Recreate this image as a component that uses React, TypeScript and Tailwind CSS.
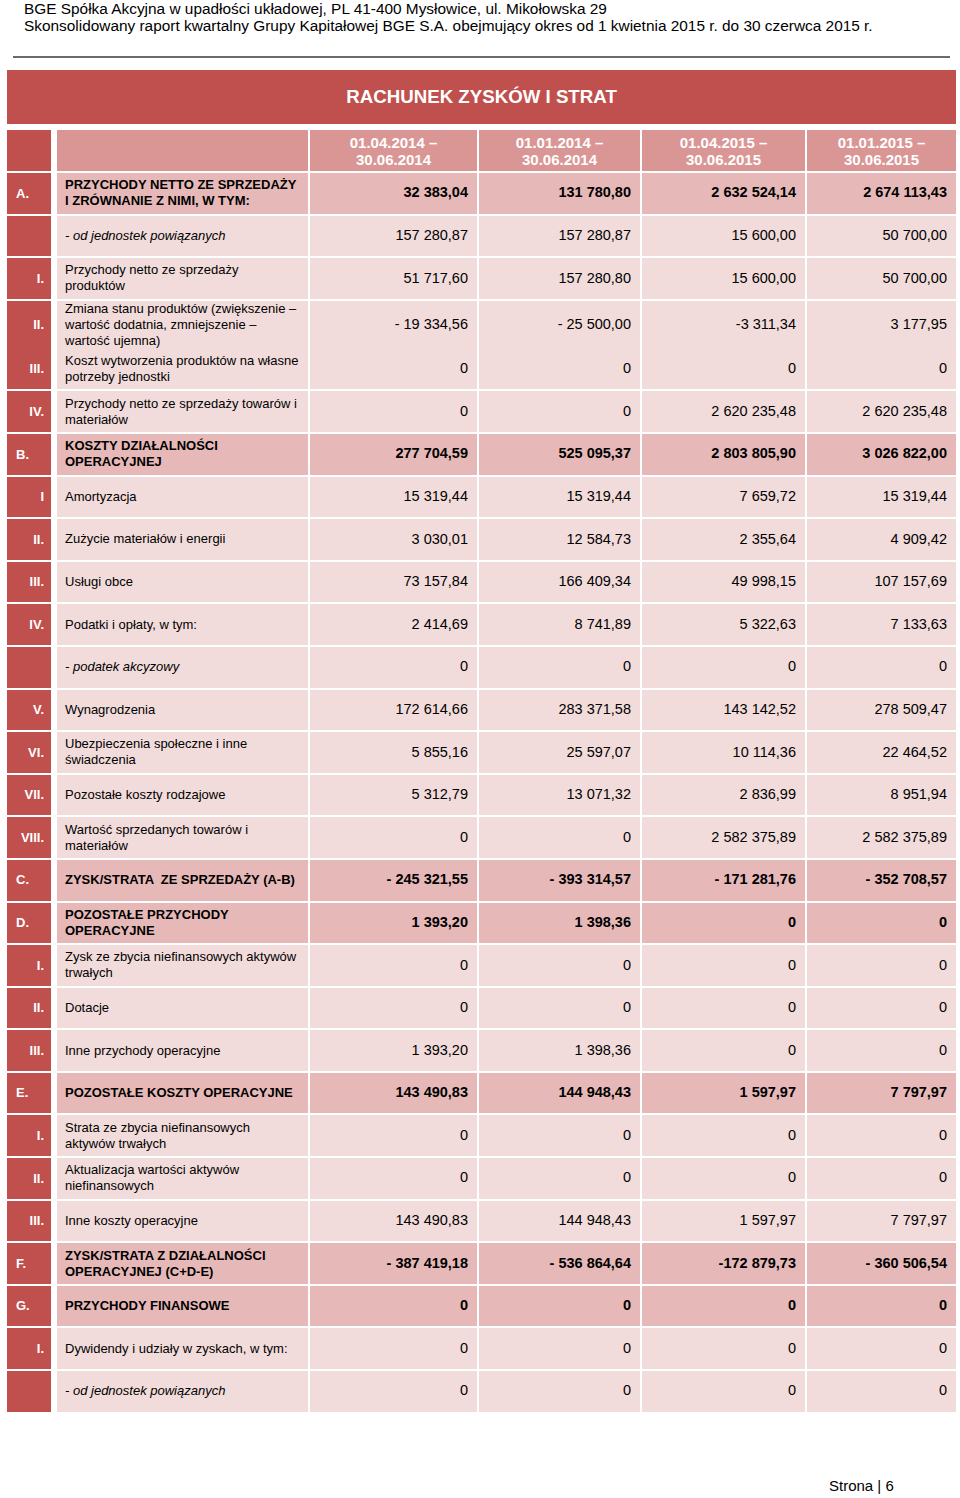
type Row = {
  k: string;
  label: string;
  v: string[];
  bold?: boolean;
  italic?: boolean;
  tall?: boolean;
};

const ROWS: Row[] = [
  { k: "A.", label: "PRZYCHODY NETTO ZE SPRZEDAŻY\nI ZRÓWNANIE Z NIMI, W TYM:", v: ["32 383,04", "131 780,80", "2 632 524,14", "2 674 113,43"], bold: true },
  { k: "", label: "- od jednostek powiązanych", v: ["157 280,87", "157 280,87", "15 600,00", "50 700,00"], italic: true },
  { k: "I.", label: "Przychody netto ze sprzedaży\nproduktów", v: ["51 717,60", "157 280,80", "15 600,00", "50 700,00"] },
  { k: "II.", label: "Zmiana stanu produktów (zwiększenie –\nwartość dodatnia, zmniejszenie –\nwartość ujemna)", v: ["- 19 334,56", "- 25 500,00", "-3 311,34", "3 177,95"], tall: true },
  { k: "III.", label: "Koszt wytworzenia produktów na własne\npotrzeby jednostki", v: ["0", "0", "0", "0"] },
  { k: "IV.", label: "Przychody netto ze sprzedaży towarów i\nmateriałów", v: ["0", "0", "2 620 235,48", "2 620 235,48"] },
  { k: "B.", label: "KOSZTY DZIAŁALNOŚCI\nOPERACYJNEJ", v: ["277 704,59", "525 095,37", "2 803 805,90", "3 026 822,00"], bold: true },
  { k: "I", label: "Amortyzacja", v: ["15 319,44", "15 319,44", "7 659,72", "15 319,44"] },
  { k: "II.", label: "Zużycie materiałów i energii", v: ["3 030,01", "12 584,73", "2 355,64", "4 909,42"] },
  { k: "III.", label: "Usługi obce", v: ["73 157,84", "166 409,34", "49 998,15", "107 157,69"] },
  { k: "IV.", label: "Podatki i opłaty, w tym:", v: ["2 414,69", "8 741,89", "5 322,63", "7 133,63"] },
  { k: "", label: "- podatek akcyzowy", v: ["0", "0", "0", "0"], italic: true },
  { k: "V.", label: "Wynagrodzenia", v: ["172 614,66", "283 371,58", "143 142,52", "278 509,47"] },
  { k: "VI.", label: "Ubezpieczenia społeczne i inne\nświadczenia", v: ["5 855,16", "25 597,07", "10 114,36", "22 464,52"] },
  { k: "VII.", label: "Pozostałe koszty rodzajowe", v: ["5 312,79", "13 071,32", "2 836,99", "8 951,94"] },
  { k: "VIII.", label: "Wartość sprzedanych towarów i\nmateriałów", v: ["0", "0", "2 582 375,89", "2 582 375,89"] },
  { k: "C.", label: "ZYSK/STRATA  ZE SPRZEDAŻY (A-B)", v: ["- 245 321,55", "- 393 314,57", "- 171 281,76", "- 352 708,57"], bold: true },
  { k: "D.", label: "POZOSTAŁE PRZYCHODY\nOPERACYJNE", v: ["1 393,20", "1 398,36", "0", "0"], bold: true },
  { k: "I.", label: "Zysk ze zbycia niefinansowych aktywów\ntrwałych", v: ["0", "0", "0", "0"] },
  { k: "II.", label: "Dotacje", v: ["0", "0", "0", "0"] },
  { k: "III.", label: "Inne przychody operacyjne", v: ["1 393,20", "1 398,36", "0", "0"] },
  { k: "E.", label: "POZOSTAŁE KOSZTY OPERACYJNE", v: ["143 490,83", "144 948,43", "1 597,97", "7 797,97"], bold: true },
  { k: "I.", label: "Strata ze zbycia niefinansowych\naktywów trwałych", v: ["0", "0", "0", "0"] },
  { k: "II.", label: "Aktualizacja wartości aktywów\nniefinansowych", v: ["0", "0", "0", "0"] },
  { k: "III.", label: "Inne koszty operacyjne", v: ["143 490,83", "144 948,43", "1 597,97", "7 797,97"] },
  { k: "F.", label: "ZYSK/STRATA Z DZIAŁALNOŚCI\nOPERACYJNEJ (C+D-E)", v: ["- 387 419,18", "- 536 864,64", "-172 879,73", "- 360 506,54"], bold: true },
  { k: "G.", label: "PRZYCHODY FINANSOWE", v: ["0", "0", "0", "0"], bold: true },
  { k: "I.", label: "Dywidendy i udziały w zyskach, w tym:", v: ["0", "0", "0", "0"] },
  { k: "", label: "- od jednostek powiązanych", v: ["0", "0", "0", "0"], italic: true },
];

const PERIODS = [
  ["01.04.2014 –", "30.06.2014"],
  ["01.01.2014 –", "30.06.2014"],
  ["01.04.2015 –", "30.06.2015"],
  ["01.01.2015 –", "30.06.2015"],
];

const GRID = "grid grid-cols-[48px_251px_167px_161px_163px_149px] gap-x-[2px]";

function TableRow({ row }: { row: Row }) {
  const bg = row.bold ? "bg-[#e6b9b8]" : "bg-[#f2dcdb]";
  const letter = row.k.length === 2 && /[A-G]/.test(row.k[0]);
  return (
    <div className={`${GRID} ${row.tall ? "h-[46px]" : "h-[40.6px]"}`}>
      <div
        className={`mr-[4px] bg-[#c0504d] flex items-center text-white font-bold text-[13px] ${
          letter ? "justify-start pl-[9px]" : "justify-end pr-[7px]"
        }`}
      >
        {row.k}
      </div>
      <div
        className={`${bg} flex items-center pl-[8px] whitespace-pre text-[13px] leading-[16px] ${
          row.bold ? "font-bold" : ""
        } ${row.italic ? "italic" : ""}`}
      >
        {row.label}
      </div>
      {row.v.map((val, i) => (
        <div
          key={i}
          className={`${bg} flex items-center justify-end pr-[9px] text-[14.5px] ${
            row.bold ? "font-bold" : ""
          }`}
        >
          {val}
        </div>
      ))}
    </div>
  );
}

export default function App() {
  return (
    <div className="w-[960px] h-[1498px] bg-white text-black font-['Liberation_Sans',Arial,sans-serif] relative">
      <div className="pl-[24px] text-[15.4px] leading-[17px] pt-[0px]">
        <p>BGE Spółka Akcyjna w upadłości układowej, PL 41-400 Mysłowice, ul. Mikołowska 29</p>
        <p>Skonsolidowany raport kwartalny Grupy Kapitałowej BGE S.A. obejmujący okres od 1 kwietnia 2015 r. do 30 czerwca 2015 r.</p>
      </div>
      <div className="ml-[13px] mt-[22px] w-[937px] h-[2px] bg-[#6b6b6b]" />

      <div className="ml-[7px] w-[949px] mt-[12px]">
        <div className="h-[54px] bg-[#c0504d] flex items-center justify-center text-white font-bold text-[18.7px]">
          RACHUNEK ZYSKÓW I STRAT
        </div>
        <div className="mt-[6px] flex flex-col gap-y-[2px]">
          <div className={`${GRID} h-[41px]`}>
            <div className="mr-[4px] bg-[#c0504d]" />
            <div className="bg-[#d99694]" />
            {PERIODS.map((p, i) => (
              <div
                key={i}
                className="bg-[#d99694] flex flex-col items-center justify-center text-white font-bold text-[15px] leading-[17px]"
              >
                <span>{p[0]}</span>
                <span>{p[1]}</span>
              </div>
            ))}
          </div>
          {ROWS.map((r, i) => (
            <TableRow key={i} row={r} />
          ))}
        </div>
      </div>

      <div className="absolute left-[829px] top-[1477px] text-[15px] leading-[18px]">Strona | 6</div>
    </div>
  );
}
